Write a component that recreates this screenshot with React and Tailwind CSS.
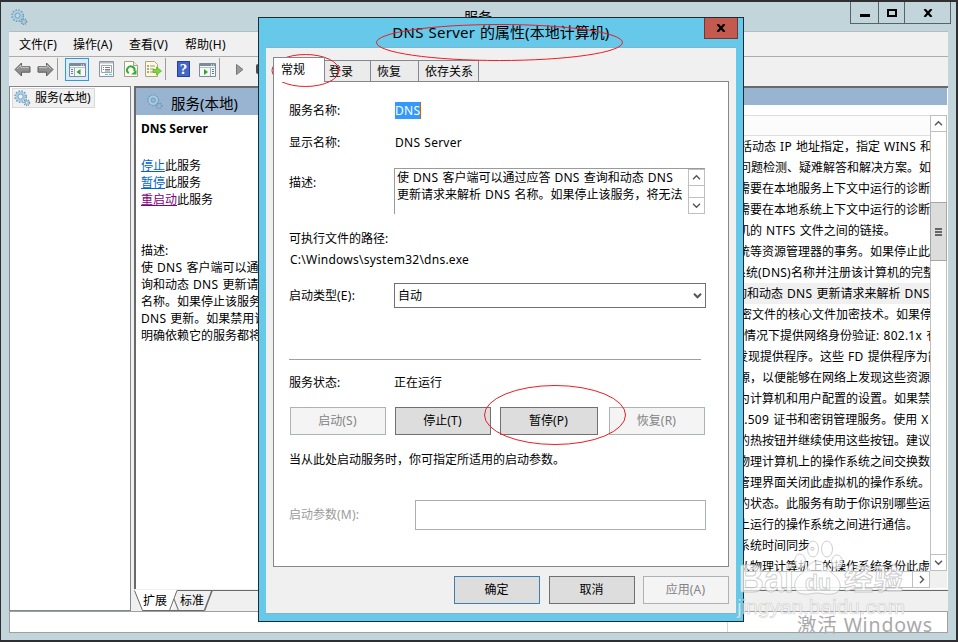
import clsx from 'clsx';

const services = [
   { text: '括动态 IP 地址指定，指定 WINS 和', left: 356 },
   { text: '问题检测、疑难解答和解决方案。如', left: 355 },
   { text: '需要在本地服务上下文中运行的诊断', left: 354 },
   { text: '需要在本地系统上下文中运行的诊断', left: 354 },
   { text: '机的 NTFS 文件之间的链接。', left: 354 },
   { text: '统等资源管理器的事务。如果停止此', left: 354 },
   { text: '系统(DNS)名称并注册该计算机的完整', left: 350 },
   { text: '询和动态 DNS 更新请求来解析 DNS', left: 351, selected: true },
   { text: '密文件的核心文件加密技术。如果停', left: 356 },
   { text: '情况下提供网络身份验证: 802.1x 有', left: 360 },
   { text: '发现提供程序。这些 FD 提供程序为简', left: 352 },
   { text: '源，以便能够在网络上发现这些资源', left: 354 },
   { text: '为计算机和用户配置的设置。如果禁', left: 354 },
   { text: 'X.509 证书和密钥管理服务。使用 X', left: 353 },
   { text: '的热按钮并继续使用这些按钮。建议', left: 354 },
   { text: '物理计算机上的操作系统之间交换数', left: 354 },
   { text: '管理界面关闭此虚拟机的操作系统。', left: 354 },
   { text: '的状态。此服务有助于你识别哪些运', left: 354 },
   { text: '上运行的操作系统之间进行通信。', left: 354 },
   { text: '系统时间同步。', left: 354 },
   { text: '从物理计算机上的操作系统备份此虚', left: 354 },
];

// Latin runs are set slightly wider than the Chinese text around them
const Text = ({ children }) => (
   <span className="whitespace-nowrap">
      {children.split(/([ -~]+)/).map((part, i) =>
         i % 2 ? (
            <span key={i} className="tracking-[0.25px] [word-spacing:0.7px]">
               {part}
            </span>
         ) : (
            part
         )
      )}
   </span>
);

const Gear = ({ className }) => (
   <svg className={clsx('shrink-0', className)} viewBox="0 0 18 18" fill="none">
      <circle cx="7" cy="7" r="5.8" stroke="#6f9dbb" strokeWidth="2" strokeDasharray="1.700 1.340" />
      <circle cx="7" cy="7" r="4" stroke="#a4cde6" strokeWidth="2.6" />
      <circle cx="7" cy="7" r="2.6" stroke="#5f8fb0" strokeWidth="0.7" />
      <circle cx="13.6" cy="13.4" r="2.8" stroke="#6c8da2" strokeWidth="1.6" strokeDasharray="1.100 0.900" />
      <circle cx="13.6" cy="13.4" r="1.6" stroke="#94b9d0" strokeWidth="1.3" />
   </svg>
);

const Chevron = ({ dir, bold }) => (
   <svg width="9" height="9" viewBox="0 0 9 9" fill="none" stroke="#555" strokeWidth={bold ? 2 : 1.4}>
      {dir === 'up' && <path d="M1 6.2 4.5 2.7 8 6.2" />}
      {dir === 'down' && <path d="M1 2.8 4.5 6.3 8 2.8" />}
      {dir === 'right' && <path d="M3 1 6.5 4.5 3 8" />}
   </svg>
);

const Arrow = ({ className }) => (
   <svg className={className} width="17" height="15" viewBox="0 0 17 15">
      <path d="M1 7.5 7.5 1v3.8H16v5.4H7.5V14z" fill="#8f8f8f" stroke="#5c5c5c" strokeLinejoin="round" />
      <path d="M3 7 7 3v2.6h8" fill="none" stroke="#c4c4c4" />
   </svg>
);

const PanelIcon = ({ flip }) => (
   <svg width="17" height="14" viewBox="0 0 17 14">
      <path d="M.5.5h16v13H.5z" fill="#f5f7f8" stroke="#7f8a94" />
      <path d="M1 1h15v2H1z" fill="#7c8b9a" />
      <path d="M12 2h1M14 2h1" stroke="#fff" />
      <path d="M1 4.5h15" stroke="#b5bfc8" />
      {flip ? (
         <>
            <path d="M11.5 5v8" stroke="#a1acb5" />
            <path d="M13 6.5h2M13 8.5h2M13 10.5h2" stroke="#4a86c5" />
            <path d="M5 6v6l4-3z" fill="#35a435" />
         </>
      ) : (
         <>
            <path d="M5.5 5v8" stroke="#a1acb5" />
            <path d="M2 6.5h2M2 8.5h2M2 10.5h2" stroke="#4a86c5" />
            <path d="M11.5 6v6l-4-3z" fill="#35a435" />
         </>
      )}
   </svg>
);

const Toolbar = () => (
   <div className="flex h-[24px] items-center bg-[#f0f0f0] pl-[5px]">
      <Arrow />
      <Arrow className="ml-[6px] -scale-x-100" />
      <div className="ml-[3px] h-[22px] w-px bg-[#9c9c9c]" />
      <div className="ml-[7px] flex h-[23px] w-[24px] items-center justify-center border border-[#3399dd] bg-[#daebf9] pt-[2px]">
         <PanelIcon />
      </div>
      <svg className="ml-[10px]" width="15" height="16" viewBox="0 0 15 16">
         <path d="M.5.5h14v15H.5z" fill="#fafafa" stroke="#8d949a" />
         <path d="M1 1h13v1.5H1z" fill="#b5bcc4" />
         <path d="M2.500 4.500h10v7h-10z" fill="#fff" stroke="#9da5ad" />
         <path d="M4 6.500h1M6 6.500h5M4 8.500h1M6 8.500h5M6 10h5" stroke="#76818c" />
         <path d="M6 13.500h3M10 13.500h3" stroke="#58c8e8" />
      </svg>
      <svg className="ml-[10px]" width="14" height="16" viewBox="0 0 14 16">
         <path d="M.5.500h9l4 4v11H.5z" fill="#fdfdf6" stroke="#a3a08a" />
         <path d="M9.500.500v4h4" fill="#eee" stroke="#a3a08a" />
         <path d="M4.800 12.200A3.700 3.700 0 1 1 10.200 10.500" fill="none" stroke="#36ad36" strokeWidth="2" />
         <path d="M7 13.500h5.500V9z" fill="#36ad36" />
      </svg>
      <svg className="ml-[7px]" width="17" height="16" viewBox="0 0 17 16">
         <path d="M.5.500h9l3 3v12H.500z" fill="#fdf9dc" stroke="#aaa386" />
         <path d="M2 5h2M2 8h2M2 11h2" stroke="#555" />
         <path d="M5 5h5M5 8h4M5 11h5" stroke="#9a9786" />
         <path d="M8 8.500h3.500v-2.500L16.500 10l-5 4v-2.500H8z" fill="#7fd438" stroke="#55ad22" strokeWidth=".7" />
      </svg>
      <div className="ml-[3px] h-[22px] w-px bg-[#9c9c9c]" />
      <div className="ml-[11px] flex h-[16px] w-[13px] items-center justify-center border border-[#28429a] bg-[#4166ca] font-['Liberation_Serif',serif] text-[15px] font-bold leading-none text-white">
         ?
      </div>
      <div className="ml-[9px] pt-[2px]">
         <PanelIcon flip />
      </div>
      <div className="ml-[3px] h-[22px] w-px bg-[#9c9c9c]" />
      <svg className="ml-[16px]" width="8" height="11" viewBox="0 0 8 11">
         <path d="M.5.500 7 5.500.500 10.500z" fill="#9b9b9b" stroke="#777" />
      </svg>
      <div className="ml-[12px] h-[10px] w-[10px] rounded-[2px] bg-[#4c4c4c]" />
   </div>
);

const ServiceWindow = () => (
   <div className="flex h-full flex-col border-t-2 border-r-2 border-b-2 border-l border-[#2f2f31] bg-[#c2d5da] pr-[8px] pb-[7px] pl-[8px]">
      {/* Title bar */}
      <div className="flex h-[30px] items-start border-b border-[#b3bcc0]">
         <Gear className="mt-[7px] ml-[2px] h-[17px] w-[17px]" />
         <div className="mt-[4px] flex-1 pl-[78px] text-center text-[14px] leading-[22px]">服务</div>
         <div className="-mr-[3px] flex h-[22px] w-[101px] border border-t-0 border-[#56636b]">
            <div className="flex w-[28px] justify-center border-r border-[#56636b] pt-[12px]">
               <div className="h-[3px] w-[10px] bg-black" />
            </div>
            <div className="flex w-[26px] justify-center border-r border-[#56636b] pt-[7px]">
               <div className="h-[8px] w-[10px] border-2 border-black" />
            </div>
            <div className="flex flex-1 justify-center pt-[7px]">
               <svg width="10" height="8" viewBox="0 0 10 8">
                  <path d="M1.500 0 8.500 8M8.500 0 1.500 8" stroke="#000" strokeWidth="2.200" />
               </svg>
            </div>
         </div>
      </div>
      {/* Menu */}
      <div className="flex h-[25px] items-center gap-[16px] border-b border-[#adadad] bg-[#f0f0f0] pt-px pl-[10px]">
         {['文件(F)', '操作(A)', '查看(V)', '帮助(H)'].map((item) => (
            <div key={item} className="w-[40px] first:w-[38px]">
               <Text>{item}</Text>
            </div>
         ))}
      </div>
      <Toolbar />
      <div className="flex h-[530px] bg-[#f0f0f0] pt-[5px]">
         <div className="h-full w-[122px] border border-[#828790] bg-white p-[2px] pt-[1px]">
            <div className="flex h-[20px] w-[83px] items-center gap-[4px] border border-[#d9d9d9] bg-[#f1f1f1] pl-px">
               <Gear className="h-[17px] w-[17px]" />
               <Text>服务(本地)</Text>
            </div>
         </div>
         <div className="ml-[3px] flex h-full flex-1 flex-col">
            <div className="flex h-[503px] overflow-hidden border-t-2 border-l-2 border-[#696969] bg-white">
               {/* Extended view */}
               <div className="w-[248px] shrink-0 whitespace-nowrap leading-[17px]">
                  <div className="flex h-[27px] items-center gap-[8px] bg-[#99b4d1] pl-[11px] text-[14.5px]">
                     <Gear className="h-[16px] w-[16px]" />
                     <div className="pt-[4px]">
                        <Text>服务(本地)</Text>
                     </div>
                  </div>
                  <div className="pt-[5px] pl-[5px]">
                     <div className="font-bold">DNS Server</div>
                     <div className="mt-[20px]">
                        <span className="text-[#0066cc] underline">停止</span>此服务
                     </div>
                     <div>
                        <span className="text-[#0066cc] underline">暂停</span>此服务
                     </div>
                     <div>
                        <span className="text-[#800080] underline">重启动</span>此服务
                     </div>
                     <div className="mt-[34px]">描述:</div>
                     {['使 DNS 客户端可以通过', '询和动态 DNS 更新请求', '名称。如果停止该服务，', 'DNS 更新。如果禁用该服', '明确依赖它的服务都将无'].map((line) => (
                        <div key={line}>
                           <Text>{line}</Text>
                        </div>
                     ))}
                  </div>
               </div>
               {/* Service list */}
               <div className="flex w-[563px] flex-col">
                  <div className="h-[17px] bg-[#99b4d1]" />
                  <div className="mt-[10px] flex h-[456px]">
                     <div className="w-[546px] overflow-hidden">
                        <div className="h-[21px] border-y border-[#dedede] bg-[#fcfcfc]" />
                        {services.map(({ text, left, selected }, i) => (
                           <div
                              key={i}
                              className={clsx('h-[21px] whitespace-nowrap leading-[21px]', selected && 'bg-[#f0f0f0]')}
                              style={{ paddingLeft: left }}
                           >
                              <Text>{text}</Text>
                           </div>
                        ))}
                     </div>
                     <div className="flex w-[17px] flex-col border border-[#bfbfbf] bg-white">
                        <div className="flex h-[16px] items-center justify-center border-b border-[#bfbfbf]">
                           <Chevron dir="up" />
                        </div>
                        <div className="-mx-px mt-[70px] flex h-[59px] flex-col items-center justify-center gap-px border border-[#a6a6a6] bg-[#dcdcdc]">
                           <div className="h-[2px] w-[7px] bg-[#666]" />
                           <div className="h-[2px] w-[7px] bg-[#666]" />
                           <div className="h-[2px] w-[7px] bg-[#666]" />
                        </div>
                        <div className="mt-auto flex h-[16px] items-center justify-center border-t border-[#bfbfbf]">
                           <Chevron dir="down" />
                        </div>
                     </div>
                  </div>
                  <div className="flex h-[17px] bg-[#f0f0f0]">
                     <div className="flex w-[546px] justify-end border border-[#bfbfbf] bg-white">
                        <div className="flex w-[17px] items-center justify-center border-l border-[#bfbfbf]">
                           <Chevron dir="right" />
                        </div>
                     </div>
                  </div>
               </div>
            </div>
            {/* View tabs */}
            <div className="flex h-[22px] pt-px">
               <svg width="78" height="21" viewBox="0 0 78 21" className="shrink-0 overflow-visible">
                  <path d="M0 0h43l-5 20H8z" fill="#fff" />
                  <path d="M.5.500 8.500 20.500M35.500 20.500 43 .500H814M40 9l4.500 11.500M8.500 20.500h62" fill="none" stroke="#696969" />
                  <path d="M70.500 20.500 78 .500" stroke="#696969" strokeWidth="1.600" />
                  <text x="9" y="15" fontSize="12">扩展</text>
                  <text x="46" y="15" fontSize="12">标准</text>
               </svg>
            </div>
         </div>
      </div>
      {/* Status bar */}
      <div className="flex h-[22px] border border-[#a0a0a0] bg-white">
         <div className="w-[718px] border-r border-[#d5d5d5]" />
         <div className="w-[133px] border-r border-[#d5d5d5]" />
      </div>
   </div>
);

const DialogButton = ({ children, className, disabled, primary }) => (
   <button
      disabled={disabled}
      className={clsx(
         'flex h-[28px] items-center justify-center border pr-px',
         disabled && 'border-[#adb2b5] bg-[#f4f4f4] text-[#838383]',
         !disabled && !primary && 'border-[#707070] bg-[#dddddd]',
         primary && 'border-[#3c7fb1] bg-[#dddddd]',
         className
      )}
   >
      <Text>{children}</Text>
   </button>
);

const Row = ({ label, className, children }) => (
   <div className={clsx('flex h-[16px] items-center', className)}>
      <div className="w-[106px] shrink-0 pt-[2px]">
         <Text>{label}</Text>
      </div>
      {children}
   </div>
);

const PropertiesDialog = () => (
   <div className="absolute top-[17px] left-[258px] flex h-[605px] w-[486px] flex-col border border-[#1f2c36] bg-[#66c9ea] px-[7px] pb-[7px]">
      <div className="flex h-[29px] items-start">
         <div className="flex-1 pl-[32px] text-center text-[15px] leading-[29px]">
            <Text>DNS Server 的属性(本地计算机)</Text>
         </div>
         <div className="-mr-[2px] flex h-[21px] w-[34px] items-center justify-center border border-t-0 border-[#6b3836] bg-[#c4594f]">
            <svg width="10" height="8" viewBox="0 0 10 8">
               <path d="M1.500 0 8.500 8M8.500 0 1.500 8" stroke="#000" strokeWidth="2.200" />
            </svg>
         </div>
      </div>
      <div className="flex flex-1 flex-col border-y border-[#82b4cc] bg-[#f0f0f0] px-[7px]">
         {/* Tabs */}
         <div className="mt-[9px] flex h-[25px] items-end">
            <div className="z-10 flex h-[25px] w-[52px] border border-b-0 border-[#828790] bg-white pt-[2px] pl-[7px] leading-[20px]">常规</div>
            <div className="flex h-[22px] w-[46px] border-t border-r border-[#828790] bg-[#ebebeb] pl-[4px] leading-[21px]">登录</div>
            <div className="flex h-[22px] w-[48px] border-t border-r border-[#828790] bg-[#ebebeb] pl-[6px] leading-[21px]">恢复</div>
            <div className="flex h-[22px] w-[60px] border-t border-r border-[#828790] bg-[#ebebeb] pl-[6px] leading-[21px]">依存关系</div>
         </div>
         <div className="-mt-px flex h-[486px] flex-col border border-[#828790] bg-white pt-[20px] pl-[15px]">
            <Row label="服务名称:">
               <span className="h-[17px] border-r border-[#cc6600] bg-[#3399ff] leading-[17px] text-white">
                  <Text>DNS</Text>
               </span>
            </Row>
            <Row label="显示名称:" className="mt-[16px]">
               <div className="pt-[2px]">
                  <Text>DNS Server</Text>
               </div>
            </Row>
            <div className="mt-[18px] flex h-[46px]">
               <div className="w-[105px] shrink-0 pt-[7px]">描述:</div>
               <div className="flex w-[311px] border-t border-l border-[#9a9a9a]">
                  <div className="flex-1 pl-[2px] leading-[17px] whitespace-nowrap">
                     <div>
                        <Text>使 DNS 客户端可以通过应答 DNS 查询和动态 DNS</Text>
                     </div>
                     <div>
                        <Text>更新请求来解析 DNS 名称。如果停止该服务，将无法</Text>
                     </div>
                  </div>
                  <div className="flex w-[17px] shrink-0 flex-col justify-between border border-[#bfbfbf]">
                     <div className="flex h-[16px] items-center justify-center border-b border-[#bfbfbf]">
                        <Chevron dir="up" />
                     </div>
                     <div className="flex h-[16px] items-center justify-center border-t border-[#bfbfbf]">
                        <Chevron dir="down" />
                     </div>
                  </div>
               </div>
            </div>
            <Row label="可执行文件的路径:" className="mt-[16px]" />
            <div className="mt-[6px] h-[16px] pl-px leading-[16px]">
               <Text>{'C:\\Windows\\system32\\dns.exe'}</Text>
            </div>
            <div className="mt-[15px] flex h-[25px] items-center">
               <div className="w-[105px]">
                  <Text>启动类型(E):</Text>
               </div>
               <div className="flex h-full w-[312px] items-center justify-between border border-[#707070] pr-[3px] pl-[3px]">
                  自动
                  <Chevron dir="down" bold />
               </div>
            </div>
            <div className="mt-[51px] h-px w-[412px] bg-[#a0a0a0]" />
            <Row label="服务状态:" className="mt-[14px]">
               <span className="-ml-px pt-[2px]">正在运行</span>
            </Row>
            <div className="mt-[17px] flex pl-px">
               <DialogButton disabled className="w-[96px]">启动(S)</DialogButton>
               <DialogButton className="ml-[9px] w-[96px]">停止(T)</DialogButton>
               <DialogButton className="ml-[9px] w-[98px]">暂停(P)</DialogButton>
               <DialogButton disabled className="ml-[11px] w-[96px]">恢复(R)</DialogButton>
            </div>
            <div className="mt-[17px] h-[16px] leading-[16px]">当从此处启动服务时，你可指定所适用的启动参数。</div>
            <div className="mt-[32px] flex h-[30px] items-center text-[#9b9b9b]">
               <div className="w-[126px]">
                  <Text>启动参数(M):</Text>
               </div>
               <div className="h-full w-[291px] border border-[#abadb3] bg-white" />
            </div>
         </div>
         <div className="mt-[9px] flex justify-end">
            <DialogButton primary className="w-[86px]">确定</DialogButton>
            <DialogButton className="ml-[9px] w-[86px]">取消</DialogButton>
            <DialogButton disabled className="ml-[8px] w-[86px]">应用(A)</DialogButton>
         </div>
      </div>
   </div>
);

// Hand drawn red marks and the site watermark
const Overlay = () => (
   <svg className="pointer-events-none absolute inset-0" width="958" height="642" viewBox="0 0 958 642">
      <g fill="none" stroke="#ed1c24" strokeWidth="1">
         <ellipse cx="499.500" cy="42.500" rx="123" ry="18" />
         <ellipse cx="305.500" cy="70.500" rx="33.500" ry="16" />
         <ellipse cx="555" cy="415" rx="70.500" ry="29.500" />
      </g>
      <text x="797" y="632" fontSize="19.500" fill="#a9a9a9" textLength="135">激活 Windows</text>
      <g
         fill="#fff"
         fillOpacity="0.7"
         stroke="#b5b5b5"
         strokeOpacity="0.65"
         className="font-['Liberation_Sans','Noto_Sans_CJK_SC',sans-serif]"
      >
         <ellipse cx="800" cy="561" rx="5.500" ry="7" />
         <ellipse cx="813" cy="549" rx="5.500" ry="8" />
         <ellipse cx="827" cy="549" rx="5.500" ry="8" />
         <ellipse cx="837" cy="562" rx="5.500" ry="7" />
         <path d="M817 561c-8 0-10 9-17 14s-8 18 3 19c6 1 8-1 14-1s9 2 15 1c11-1 10-13 2-19s-9-14-17-14z" />
         <text x="738" y="592" fontSize="38" fontWeight="700" textLength="56" lengthAdjust="spacingAndGlyphs">Bai</text>
         <text x="805" y="590" fontSize="22" fontWeight="700" textLength="26" lengthAdjust="spacingAndGlyphs">du</text>
         <text x="844" y="590" fontSize="29" fontWeight="700" textLength="59">经验</text>
         <text x="737" y="614" fontSize="20" fontWeight="400" strokeWidth="0.600" textLength="168" lengthAdjust="spacingAndGlyphs">jingyan.baidu.com</text>
      </g>
   </svg>
);

const App = () => {
   return (
      <div className="relative h-[642px] w-[958px] overflow-hidden font-['Noto_Sans','Noto_Sans_CJK_SC',sans-serif] text-[12px] leading-[16px] text-black">
         <ServiceWindow />
         <PropertiesDialog />
         <Overlay />
      </div>
   );
};

export default App;
